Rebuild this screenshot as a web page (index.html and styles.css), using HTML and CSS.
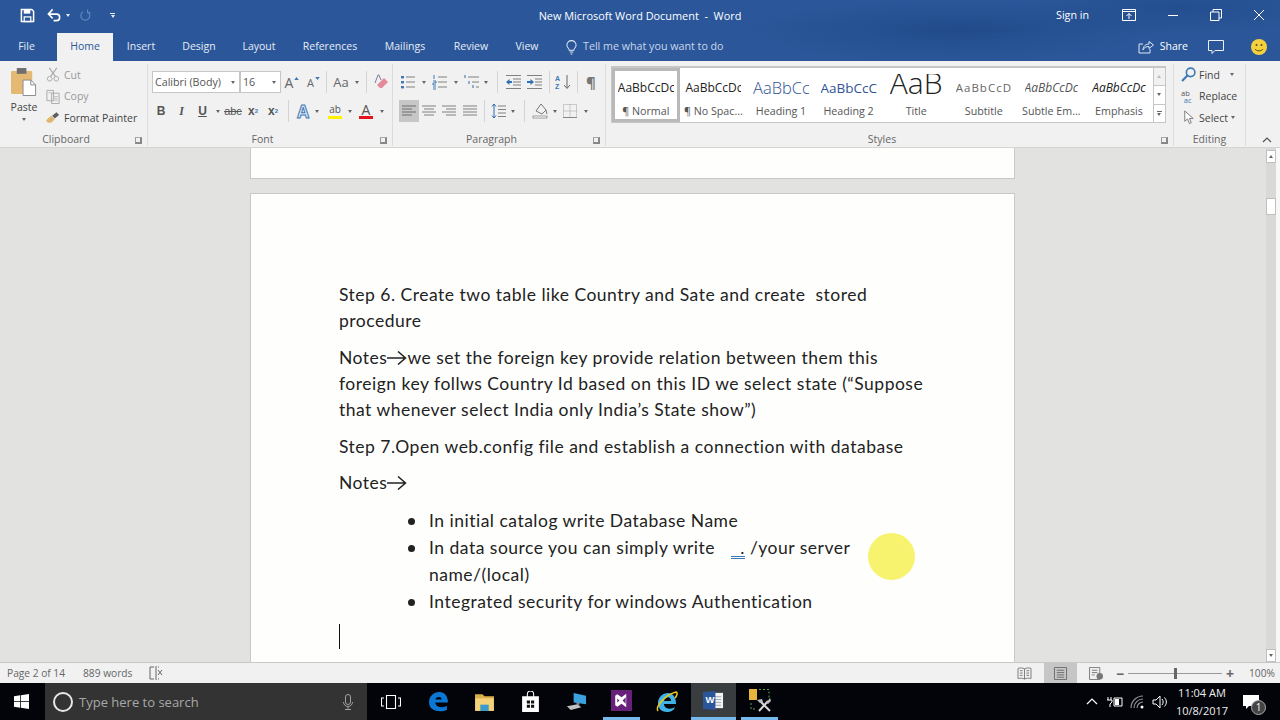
FILE: index.html
```html
<!DOCTYPE html>
<html lang="en">
<head>
    <meta charset="UTF-8">
    <title>New Microsoft Word Document - Word</title>
    <link rel="stylesheet" href="styles.css">
</head>
<body>

    <svg class="defs" aria-hidden="true">
        <symbol id="ic-list" viewBox="0 0 16 16"><g fill="#3f78b5"><rect x="1" y="2" width="3" height="2.4"/><rect x="1" y="7" width="3" height="2.4"/><rect x="1" y="12" width="3" height="2.4"/></g><path d="M6 3h9M6 8h9M6 13h9" stroke="#808080" stroke-width="1.2"/></symbol>
        <symbol id="ic-num" viewBox="0 0 16 16"><path d="M2 1v4M1 7h3v2H1v2h3M1 13h3M1 15h3" stroke="#3f78b5" stroke-width="1" fill="none"/><path d="M6 3h9M6 8h9M6 13h9" stroke="#808080" stroke-width="1.2"/></symbol>
        <symbol id="ic-multi" viewBox="0 0 16 16"><path d="M1 1v3M5 7v3M9 11v3" stroke="#3f78b5" stroke-width="1.1"/><path d="M4 3h11M8 8h7M12 13h3" stroke="#808080" stroke-width="1.2"/></symbol>
        <symbol id="ic-outdent" viewBox="0 0 16 16"><path d="M1 1.500h15M8 5h8M8 8h8M8 11h8M1 14.500h15" stroke="#808080" stroke-width="1.1"/><path d="M1 8l3.500-3v2H7v2H4.500v2z" fill="#2f6fb3"/></symbol>
        <symbol id="ic-indent" viewBox="0 0 16 16"><path d="M1 1.500h15M9 5h7M9 8h7M9 11h7M1 14.500h15" stroke="#808080" stroke-width="1.1"/><path d="M8 8L4.500 5v2H1v2h3.500v2z" fill="#2f6fb3"/></symbol>
        <symbol id="ic-left" viewBox="0 0 16 16"><path d="M1 3h14M1 6h10M1 9h14M1 12h10" stroke="#6d6d6d" stroke-width="1.1"/></symbol>
        <symbol id="ic-center" viewBox="0 0 16 16"><path d="M1 3h14M3 6h10M1 9h14M3 12h10" stroke="#808080" stroke-width="1.1"/></symbol>
        <symbol id="ic-right" viewBox="0 0 16 16"><path d="M1 3h14M5 6h10M1 9h14M5 12h10" stroke="#808080" stroke-width="1.1"/></symbol>
        <symbol id="ic-justify" viewBox="0 0 16 16"><path d="M1 3h14M1 6h14M1 9h14M1 12h14" stroke="#808080" stroke-width="1.1"/></symbol>
    </svg>

    <header class="titlebar">
        <div class="qat">
            <svg class="qat-save" viewBox="0 0 16 16"><path d="M1.500 1.500h11l2 2v11h-13z" fill="none" stroke="#fff" stroke-width="1.600"/><rect x="4" y="2" width="7" height="4" fill="#fff"/><rect x="4.500" y="9.500" width="7" height="5" fill="none" stroke="#fff" stroke-width="1.300"/></svg>
            <svg class="qat-undo" viewBox="0 0 16 16"><path d="M2 6.500h8a3.500 3.500 0 0 1 0 7H7" fill="none" stroke="#fff" stroke-width="1.700"/><path d="M6 1.500L1.500 6.500 6 11" fill="none" stroke="#fff" stroke-width="1.700"/></svg>
            <span class="caret caret-light qat-caret"></span>
            <svg class="qat-redo" viewBox="0 0 16 16"><path d="M10.500 3.500a5.500 5.500 0 1 1-5.500 0M10.500 0.500v4h3.500" fill="none" stroke="#5f86bd" stroke-width="1.400"/></svg>
            <span class="qat-more"><i></i><span class="caret caret-light"></span></span>
        </div>
        <div class="doc-title">New Microsoft Word Document &nbsp;-&nbsp; Word</div>
        <div class="window-btns">
            <span class="sign-in">Sign in</span>
            <svg class="win-btn win-display" viewBox="0 0 14 12"><path d="M.5.500h13v11H.5zM.5 2.500h13" fill="none" stroke="#fff"/><path d="M7 10V4.500M4.500 7L7 4.500 9.500 7" fill="none" stroke="#fff"/></svg>
            <svg class="win-btn win-min" viewBox="0 0 12 12"><path d="M1 6.500h10" stroke="#fff"/></svg>
            <svg class="win-btn win-restore" viewBox="0 0 12 12"><path d="M.5 3h8.500v8.500H.5zM3 3V.500h8.500V9H9" fill="none" stroke="#fff"/></svg>
            <svg class="win-btn win-close" viewBox="0 0 12 12"><path d="M1 1l10 10M11 1L1 11" stroke="#fff"/></svg>
        </div>
    </header>

    <nav class="tabs">
        <span class="tab tab-file">File</span>
        <span class="tab tab-home">Home</span>
        <span class="tab tab-insert">Insert</span>
        <span class="tab tab-design">Design</span>
        <span class="tab tab-layout">Layout</span>
        <span class="tab tab-refs">References</span>
        <span class="tab tab-mail">Mailings</span>
        <span class="tab tab-review">Review</span>
        <span class="tab tab-view">View</span>
        <svg class="bulb" viewBox="0 0 12 16"><path d="M3.500 11c0-2-2.500-3-2.500-5.500a5 5 0 0 1 10 0c0 2.500-2.500 3.500-2.500 5.500zM4 13h4M5 15h2" fill="none" stroke="#dfe7f3" stroke-width="1.100"/></svg>
        <span class="tell">Tell me what you want to do</span>
        <span class="tabs-right">
            <svg class="share-ic" viewBox="0 0 16 14"><path d="M5 4H1v9h11V9" fill="none" stroke="#dfe7f3"/><path d="M5 10c0-4 3-6 6-6V1.500L15.500 5 11 8.500V6.500c-3 0-5 1-6 3.500z" fill="none" stroke="#dfe7f3"/></svg>
            <span class="share">Share</span>
            <svg class="comment-ic" viewBox="0 0 16 14"><path d="M.5.500h15v10H7l-3 3v-3H.5z" fill="none" stroke="#eef2f8"/></svg>
            <svg class="smiley" viewBox="0 0 16 16"><circle cx="8" cy="8" r="8" fill="#f3d23d"/><circle cx="5.500" cy="6" r="1" fill="#5c4a10"/><circle cx="10.500" cy="6" r="1" fill="#5c4a10"/><path d="M4 10c1.500 2.500 6.500 2.500 8 0" fill="none" stroke="#5c4a10"/></svg>
        </span>
    </nav>

    <section class="ribbon">
        <div class="group group-clip">
            <div class="group-body clip-body">
                <div class="paste">
                    <svg class="paste-ic" viewBox="0 0 28 30"><rect x="0" y="3" width="22" height="24" rx="1" fill="#e3b974"/><rect x="6" y="0" width="10" height="6" fill="#6f6f6f"/><path d="M12.500 12.500h8l5 5v11h-13z" fill="#fff" stroke="#8a8a8a"/><path d="M20.500 12.500v5h5" fill="none" stroke="#8a8a8a"/></svg>
                    <span class="paste-label">Paste</span>
                    <span class="caret"></span>
                </div>
                <div class="clip-list">
                    <div class="clip-row muted"><svg viewBox="0 0 14 16"><path d="M3 1l6.500 9M11 1L4.500 10" stroke="#a9a9a9" stroke-width="1.200"/><circle cx="3.500" cy="12.500" r="2.500" fill="none" stroke="#a9a9a9"/><circle cx="10.500" cy="12.500" r="2.500" fill="none" stroke="#a9a9a9"/></svg>Cut</div>
                    <div class="clip-row muted"><svg viewBox="0 0 14 16"><path d="M.5 1.500h7v11h-7zM5.500 4.500h8v11h-8z" fill="#f1f1f1" stroke="#a9a9a9"/><path d="M7 8h5M7 10h5M7 12h5M2 4h4" stroke="#bdbdbd"/></svg>Copy</div>
                    <div class="clip-row"><svg viewBox="0 0 16 14"><path d="M0 10l6-5 4 4-4 4H2z" fill="#e2b56e"/><path d="M7 5l5-4 3 3-5 4z" fill="#5f5f5f"/></svg>Format Painter</div>
                </div>
            </div>
            <div class="group-label">Clipboard<span class="launcher"></span></div>
        </div>

        <div class="group group-font">
            <div class="group-body">
                <div class="tool-row row-font1">
                    <span class="combo combo-name">Calibri (Body)<span class="caret"></span></span>
                    <span class="combo combo-size">16<span class="caret"></span></span>
                    <span class="tool t-22 glyph glyph-grow">A<svg viewBox="0 0 6 4"><path d="M3 0l3 4H0z" fill="#3f78b5"/></svg></span>
                    <span class="tool t-21 glyph glyph-shrink">A<svg viewBox="0 0 6 4"><path d="M3 4L0 0h6z" fill="#3f78b5"/></svg></span>
                    <span class="sep s-a"></span>
                    <span class="tool t-24 glyph glyph-case">Aa</span>
                    <span class="caret tool-caret t-8"></span>
                    <span class="sep s-b"></span>
                    <span class="tool t-20"><svg class="ic" viewBox="0 0 16 16"><path d="M7 14l-3-3 7-7 4 4-6 6z" fill="#e58a9b"/><path d="M2 9L5 1h1l2 5" fill="none" stroke="#7c7c9c"/></svg></span>
                </div>
                <div class="tool-row row-font2">
                    <span class="tool t-20 fmt fmt-b">B</span>
                    <span class="tool t-21 fmt fmt-i">I</span>
                    <span class="tool t-21 fmt fmt-u">U</span>
                    <span class="caret tool-caret t-10"></span>
                    <span class="tool t-20 fmt fmt-s">abc</span>
                    <span class="tool t-20 fmt">x<sub>2</sub></span>
                    <span class="tool t-20 fmt">x<sup>2</sup></span>
                    <span class="sep s-c"></span>
                    <span class="tool t-18 glyph glyph-effect">A</span>
                    <span class="caret tool-caret t-10"></span>
                    <span class="tool t-20 hl-tool ml-3">ab<i class="bar bar-yellow"></i></span>
                    <span class="caret tool-caret t-10"></span>
                    <span class="tool t-20 hl-tool hl-a ml-1">A<i class="bar bar-red"></i></span>
                    <span class="caret tool-caret t-10 ml-1"></span>
                </div>
            </div>
            <div class="group-label">Font<span class="launcher"></span></div>
        </div>

        <div class="group group-para">
            <div class="group-body">
                <div class="tool-row row-para1">
                    <span class="tool t-20"><svg class="ic"><use href="#ic-list"/></svg></span>
                    <span class="caret tool-caret t-12"></span>
                    <span class="tool t-20"><svg class="ic"><use href="#ic-num"/></svg></span>
                    <span class="caret tool-caret t-12"></span>
                    <span class="tool t-19"><svg class="ic"><use href="#ic-multi"/></svg></span>
                    <span class="caret tool-caret t-10"></span>
                    <span class="sep s-d"></span>
                    <span class="tool t-20"><svg class="ic"><use href="#ic-outdent"/></svg></span>
                    <span class="tool t-21"><svg class="ic"><use href="#ic-indent"/></svg></span>
                    <span class="sep s-e"></span>
                    <span class="tool t-20"><svg class="ic" viewBox="0 0 16 16"><text x="0" y="7" class="sort-a">A</text><text x="0" y="15" class="sort-z">Z</text><path d="M12 1v13M9 11l3 3.500 3-3.500" fill="none" stroke="#666"/></svg></span>
                    <span class="sep s-f"></span>
                    <span class="tool t-20 pilcrow">¶</span>
                </div>
                <div class="tool-row row-para2">
                    <span class="tool t-20 active"><svg class="ic"><use href="#ic-left"/></svg></span>
                    <span class="tool t-20"><svg class="ic"><use href="#ic-center"/></svg></span>
                    <span class="tool t-20"><svg class="ic"><use href="#ic-right"/></svg></span>
                    <span class="tool t-21"><svg class="ic"><use href="#ic-justify"/></svg></span>
                    <span class="sep s-g"></span>
                    <span class="tool t-18"><svg class="ic" viewBox="0 0 16 16"><path d="M3 1v14M1 3.500L3 1l2 2.500M1 12.500L3 15l2-2.500" fill="none" stroke="#2f6fb3"/><path d="M7 3h8M7 6.500h8M7 10h8M7 13.500h8" stroke="#808080"/></svg></span>
                    <span class="caret tool-caret t-10"></span>
                    <span class="sep s-h"></span>
                    <span class="tool t-20"><svg class="ic" viewBox="0 0 16 16"><path d="M4 8l5-7 5 6-4 4z" fill="#f1f1f1" stroke="#777"/><path d="M14 7l1 4" stroke="#777"/><rect x="1" y="13" width="14" height="2" fill="#fff" stroke="#777" stroke-width=".7"/></svg></span>
                    <span class="caret tool-caret t-10"></span>
                    <span class="tool t-20"><svg class="ic" viewBox="0 0 16 16"><path d="M1.500 1.500h13v13h-13zM8 1.500v13M1.500 8h13" fill="none" stroke="#a2a2a2" stroke-dasharray="1 1"/><path d="M1 14.500h14" stroke="#888"/></svg></span>
                    <span class="caret tool-caret t-10 ml-1"></span>
                </div>
            </div>
            <div class="group-label">Paragraph<span class="launcher"></span></div>
        </div>

        <div class="group group-styles">
            <div class="group-body">
                <div class="gallery">
                    <div class="style-item selected"><span class="pv pv-normal">AaBbCcDc</span><span class="nm">¶ Normal</span></div>
                    <div class="style-item"><span class="pv pv-normal">AaBbCcDc</span><span class="nm">¶ No Spac...</span></div>
                    <div class="style-item"><span class="pv pv-h1">AaBbCc</span><span class="nm">Heading 1</span></div>
                    <div class="style-item"><span class="pv pv-h2">AaBbCcC</span><span class="nm">Heading 2</span></div>
                    <div class="style-item"><span class="pv pv-title">AaB</span><span class="nm">Title</span></div>
                    <div class="style-item"><span class="pv pv-sub">AaBbCcD</span><span class="nm">Subtitle</span></div>
                    <div class="style-item"><span class="pv pv-em pv-gray">AaBbCcDc</span><span class="nm">Subtle Em...</span></div>
                    <div class="style-item"><span class="pv pv-em">AaBbCcDc</span><span class="nm">Emphasis</span></div>
                    <div class="gallery-btns">
                        <span class="g-btn g-off"><span class="caret caret-up"></span></span>
                        <span class="g-btn"><span class="caret"></span></span>
                        <span class="g-btn g-more"><i></i><span class="caret"></span></span>
                    </div>
                </div>
            </div>
            <div class="group-label">Styles<span class="launcher"></span></div>
        </div>

        <div class="group group-edit">
            <div class="group-body edit-list">
                <div class="edit-row"><svg viewBox="0 0 14 14"><circle cx="9" cy="5" r="4" fill="none" stroke="#3f78b5" stroke-width="1.500"/><path d="M6 8l-5 5" stroke="#3f78b5" stroke-width="2"/></svg>Find<span class="caret ml-6"></span></div>
                <div class="edit-row"><svg viewBox="0 0 16 16"><text x="0" y="7" class="rep-a">ab</text><text x="3" y="15" class="rep-b">ac</text></svg>Replace</div>
                <div class="edit-row"><svg viewBox="0 0 14 16"><path d="M3 1v11l3-2.500 2 5 2-1-2-4.500h4z" fill="#fff" stroke="#777"/></svg>Select<span class="caret"></span></div>
            </div>
            <div class="group-label">Editing</div>
        </div>

        <div class="ribbon-end"><svg class="collapse" viewBox="0 0 10 6"><path d="M1 5l4-4 4 4" fill="none" stroke="#555" stroke-width="1.200"/></svg></div>
    </section>

    <main class="doc-area">
        <div class="doc-scroll">
            <div class="page page-prev"></div>
            <article class="page page-cur">
                <p>Step 6. Create two table like Country and Sate and create&nbsp; stored procedure</p>
                <p>Notes<svg class="arrow" viewBox="0 0 20 14"><path d="M0 7h18M11 .5L18.500 7 11 13.500" fill="none" stroke="#222" stroke-width="1.500"/></svg>we set the foreign key provide relation between them this foreign key follws Country Id based on this ID we select state (“Suppose that whenever select India only India’s State show”)</p>
                <p>Step 7.Open web.config file and establish a connection with database</p>
                <p>Notes<svg class="arrow" viewBox="0 0 20 14"><path d="M0 7h18M11 .5L18.500 7 11 13.500" fill="none" stroke="#222" stroke-width="1.500"/></svg></p>
                <ul>
                    <li>In initial catalog write Database Name</li>
                    <li>In data source you can simply write <span class="autocorrect">.</span> /your server name/(local)</li>
                    <li>Integrated security for windows Authentication</li>
                </ul>
                <div class="text-caret"></div>
            </article>
        </div>
        <div class="scrollbar">
            <span class="sb-btn"><span class="caret caret-up"></span></span>
            <span class="sb-thumb"></span>
            <span class="sb-btn sb-down"><span class="caret"></span></span>
        </div>
        <div class="doc-edge"></div>
        <div class="mouse-spot"></div>
    </main>

    <footer class="statusbar">
        <span class="st-page">Page 2 of 14</span>
        <span class="st-words">889 words</span>
        <svg class="st-proof" viewBox="0 0 14 14"><path d="M5 1H1v12h4M9 1h1M9 13h1" fill="none" stroke="#666"/><path d="M7 0v14M9 4l4 5M13 4l-4 5" stroke="#666"/></svg>
        <span class="st-right">
            <span class="view-btn view-read"><svg viewBox="0 0 16 14"><path d="M8 2C6 .8 3 .8 1 1.500v11c2-.7 5-.7 7 .5 2-1.200 5-1.200 7-.5v-11C13 .8 10 .8 8 2zM8 2v11M3 4h3M3 6.500h3M3 9h3M10 4h3M10 6.500h3M10 9h3" fill="none" stroke="#777"/></svg></span>
            <span class="view-btn view-on"><svg viewBox="0 0 14 14"><path d="M.5.500h13v13H.5zM3 3.500h8M3 6h8M3 8.500h8M3 11h8" fill="none" stroke="#6a6a6a"/></svg></span>
            <span class="view-btn view-web"><svg viewBox="0 0 16 14"><path d="M.5.500h11v13H.5zM3 3.500h6M3 6h6M3 8.500h3" fill="none" stroke="#777"/><circle cx="11.500" cy="10" r="3.500" fill="#777"/></svg></span>
            <span class="zoom-minus">−</span>
            <span class="zoom-track"><i></i></span>
            <span class="zoom-plus">+</span>
            <span class="zoom-pct">100%</span>
        </span>
    </footer>

    <div class="taskbar">
        <div class="start"><svg viewBox="0 0 16 16"><path d="M0 2.300l6.500-.9v6.200H0zM7.300 1.300L16 0v7.600H7.300zM0 8.400h6.500v6.200L0 13.700zM7.300 8.400H16V16l-8.700-1.300z" fill="#fff"/></svg></div>
        <div class="search">
            <span class="cortana"></span>
            <span class="search-text">Type here to search</span>
            <svg class="mic" viewBox="0 0 10 16"><rect x="2.500" y=".5" width="5" height="10" rx="2.500" fill="none" stroke="#a0a0a0"/><path d="M.5 8a4.500 4.500 0 0 0 9 0M5 12.500V15M2 15.500h6" fill="none" stroke="#a0a0a0"/></svg>
        </div>
        <div class="task-icons">
            <span class="task t-view"><svg viewBox="0 0 20 16"><path d="M5.500 1.500h9v13h-9zM3 4H.5v8H3M17 4h2.500v8H17" fill="none" stroke="#fff" stroke-width="1.100"/></svg></span>
            <span class="task t-edge"><svg viewBox="0 0 20 20"><path d="M1 11C1 5 5 1 11 1c5 0 8 4 8 10H7c0 4 6 6 11 3v4c-7 3-17 1-17-7zM7 8h6c0-3-5-3-6 0z" fill="#0c78d6"/></svg></span>
            <span class="task t-files"><svg viewBox="0 0 20 18"><path d="M1 2h7l2 2h9v3H1z" fill="#d9b04a"/><path d="M1 6h18v12H1z" fill="#f4d27a"/><path d="M6 18v-6h8v6z" fill="#3a9ac9"/></svg></span>
            <span class="task t-store"><svg viewBox="0 0 18 20"><path d="M6 6V3a3 3 0 0 1 6 0v3" fill="none" stroke="#fff"/><path d="M1 5h16v15H1z" fill="#fff"/><path d="M5.500 9h3v3h-3zM9.500 9h3v3h-3zM5.500 13h3v3h-3zM9.500 13h3v3h-3z" fill="#111"/></svg></span>
            <span class="task t-remote"><svg viewBox="0 0 22 20"><path d="M8 1l13 3v9L8 11z" fill="#3aa3df"/><path d="M1 15l11-2 4 3-11 3z" fill="#c2c2c2"/><path d="M11 11l3 .5v2l-3 .5z" fill="#8a8a8a"/></svg></span>
            <span class="task t-vs"><svg viewBox="0 0 20 20"><rect width="20" height="20" fill="#68217a"/><path d="M14.500 3.500v13L10 13l-4 3-2-1.500V5.500L6 4l4 3zM6 8v4l2-2zM14 7l-3 3 3 3z" fill="#fff"/></svg></span>
            <span class="task t-ie"><svg viewBox="0 0 24 24"><path d="M21 14H9c0 5 7 6 11 3-1 4-5 5-8 5-6 0-9-4-9-9 0-6 5-10 10-10s8 4 8 11zM9 11h7c0-5-6-5-7 0z" fill="#3fb3e8"/><path d="M3 21C0 17 10 5 21 2c2 0 1 4-1 6" fill="none" stroke="#f0c419" stroke-width="1.500"/></svg></span>
            <span class="task t-word"><svg viewBox="0 0 22 22"><path d="M8 3h13v16H8z" fill="#f2f2f2"/><path d="M12 7h7M12 10h7M12 13h7M12 16h7" stroke="#9aa7ba"/><path d="M0 2l13-1v20L0 20z" fill="#2b579a"/><text x="2.500" y="14" class="word-w">W</text></svg></span>
            <span class="task t-tools"><svg viewBox="0 0 24 24"><rect x="1" y="1" width="8" height="11" fill="#e8b43c"/><path d="M11 1.500h10v9M3 15v6h6" fill="none" stroke="#59a14f" stroke-dasharray="2 2"/><path d="M11 23l9-10M12 13l10 10" stroke="#d8d8d8" stroke-width="2"/><path d="M9 12l5-1 1 3-3 1zM18 15l4-5 1 3-3 3z" fill="#bdbdbd"/></svg></span>
        </div>
        <div class="tray">
            <svg class="tray-up" viewBox="0 0 12 7"><path d="M1 6l5-5 5 5" fill="none" stroke="#fff" stroke-width="1.200"/></svg>
            <svg class="tray-power" viewBox="0 0 16 12"><path d="M7 2h8v8H7z" fill="none" stroke="#fff"/><path d="M8 3h4v6H8z" fill="#fff"/><path d="M1 1v3M4 1v3M0 4h5v2l-2 2v3" fill="none" stroke="#fff"/></svg>
            <svg class="tray-wifi" viewBox="0 0 16 14"><path d="M1 13A12 12 0 0 1 13 1M4 13A9 9 0 0 1 13 4M7 13a6 6 0 0 1 6-6" fill="none" stroke="#8f8f8f" stroke-width="1.200"/><circle cx="12" cy="12" r="1.500" fill="#fff"/></svg>
            <svg class="tray-sound" viewBox="0 0 16 14"><path d="M1 5h3l4-4v12L4 9H1zM10 4c1.500 2 1.500 4 0 6M12.500 2.500c2.500 3 2.500 6 0 9" fill="none" stroke="#fff"/></svg>
            <div class="clock"><span>11:04 AM</span><span>10/8/2017</span></div>
            <span class="notify">
                <svg viewBox="0 0 16 14"><path d="M0 0h16v11H6l-3 3v-3H0z" fill="#fff"/></svg>
                <span class="notify-count">1</span>
            </span>
        </div>
    </div>

</body>
</html>
```

FILE: styles.css
```css
* { box-sizing: border-box; }
html, body {
    margin: 0;
    width: 1280px;
    height: 720px;
    overflow: hidden;
}
body {
    font-family: "Open Sans", sans-serif;
    font-size: 10.5px;
    color: #444;
    display: flex;
    flex-direction: column;
    background: #f1f1f1;
}
.defs { display: none; }
svg { display: block; flex: none; }

/* shared bits */
.caret {
    display: inline-block;
    width: 0;
    height: 0;
    border-left: 2.5px solid transparent;
    border-right: 2.5px solid transparent;
    border-top: 3px solid #666;
}
.caret-light { border-top-color: #e8eef7; }
.caret-up { border-top: 0; border-bottom: 3px solid #666; }
.ml-1 { margin-left: 1px; }
.ml-3 { margin-left: 3px; }
.ml-6 { margin-left: 7px; }

/* title bar */
.titlebar {
    height: 33px;
    display: grid;
    grid-template-columns: 1fr auto 1fr;
    align-items: center;
    padding-bottom: 3px;
    color: #fff;
    background:
        radial-gradient(ellipse 220px 30px at 960px 30px, rgba(20, 60, 120, .45), transparent),
        radial-gradient(ellipse 160px 26px at 1180px 8px, rgba(20, 60, 120, .35), transparent),
        #2b579a;
}
.qat { display: flex; align-items: center; padding-left: 20px; }
.qat-save { width: 15px; height: 15px; }
.qat-undo { width: 15px; height: 15px; margin-left: 12px; }
.qat-caret { margin-left: 4px; }
.qat-redo { width: 13px; height: 13px; margin-left: 9px; }
.qat-more { display: flex; flex-direction: column; align-items: center; gap: 1px; margin-left: 18px; }
.qat-more i { width: 5px; height: 1px; background: #e8eef7; }
.doc-title { font-size: 10.9px; }
.window-btns { display: flex; align-items: center; justify-content: flex-end; padding-right: 15px; }
.sign-in { font-size: 10.7px; margin-right: 33px; }
.win-btn { width: 12px; height: 12px; }
.win-display { width: 14px; height: 12px; }
.win-min { margin-left: 31px; }
.win-restore { margin-left: 31px; }
.win-close { margin-left: 31px; }

/* tabs */
.tabs {
    height: 28px;
    display: flex;
    align-items: center;
    color: #e6ecf5;
    background:
        radial-gradient(ellipse 200px 30px at 950px 0, rgba(20, 60, 120, .4), transparent),
        #2b579a;
    font-size: 10.5px;
}
.tab { height: 100%; display: flex; align-items: center; justify-content: center; padding-bottom: 2px; }
.tab-file { width: 57px; padding-right: 4px; }
.tab-home { width: 56px; background: #f1f1f1; color: #2b579a; }
.tab-insert { width: 56px; }
.tab-design { width: 60px; }
.tab-layout { width: 60px; }
.tab-refs { width: 82px; }
.tab-mail { width: 68px; }
.tab-review { width: 64px; }
.tab-view { width: 48px; }
.bulb { width: 11px; height: 15px; margin-left: 15px; }
.tell { margin-left: 6px; color: #c9d6e9; padding-bottom: 2px; font-size: 10.7px; }
.tabs-right { margin-left: auto; display: flex; align-items: center; padding-right: 13px; }
.share-ic { width: 16px; height: 14px; }
.share { margin-left: 6px; color: #fff; padding-bottom: 2px; }
.comment-ic { width: 16px; height: 14px; margin-left: 20px; }
.smiley { width: 16px; height: 16px; margin-left: 27px; }

/* ribbon */
.ribbon {
    height: 87px;
    display: flex;
    background: #f1f1f1;
    border-bottom: 1px solid #d4d4d4;
}
.group {
    display: flex;
    flex-direction: column;
    border-right: 1px solid #dcdcdc;
    margin: 3px 0 1px;
}
.group-body { height: 71px; padding-top: 7px; }
.group-label {
    position: relative;
    flex: 1;
    text-align: center;
    padding-right: 15px;
    font-size: 10.5px;
    color: #666;
    line-height: 13px;
}
.group-edit .group-label { padding-right: 0; }
.launcher {
    position: absolute;
    right: 5px;
    bottom: 2px;
    width: 7px;
    height: 7px;
    border-left: 1px solid #999;
    border-top: 1px solid #999;
    border-right: 2px solid #888;
    border-bottom: 2px solid #888;
    border-top-color: #aaa;
}
.group-clip { width: 148px; }
.group-font { width: 245px; }
.group-para { width: 213px; }
.group-styles { width: 568px; }
.group-edit { width: 72px; }
.ribbon-end { flex: 1; display: flex; align-items: flex-end; justify-content: flex-end; padding: 0 8px 4px 0; }
.collapse { width: 10px; height: 6px; }

.clip-body { display: flex; padding-top: 0; }
.paste { width: 46px; display: flex; flex-direction: column; align-items: center; padding-left: 2px; }
.paste-ic { width: 27px; height: 29px; margin-top: 4px; }
.paste-label { margin-top: 2px; line-height: 16px; }
.paste .caret { margin-top: 3px; }
.clip-list { display: flex; flex-direction: column; }
.clip-row { height: 21.5px; display: flex; align-items: center; gap: 4px; white-space: nowrap; }
.clip-row svg { width: 14px; height: 15px; }
.muted { color: #9a9a9a; }

.tool-row { display: flex; align-items: center; height: 22px; }
.row-font1 { padding-left: 4px; margin-bottom: 7px; }
.row-font2 { padding-left: 3px; }
.row-para1 { padding-left: 5px; margin-bottom: 7px; }
.row-para2 { padding-left: 6px; }
.tool { height: 22px; display: flex; align-items: center; justify-content: center; flex: none; }
.t-8, .t-10, .t-12 { border: 0; height: auto; background: none; display: flex; justify-content: center; flex: none; }
.t-8 { width: 8px; }
.t-10 { width: 10px; }
.t-12 { width: 12px; }
.t-8::after, .t-10::after, .t-12::after {
    content: "";
    border-left: 2.5px solid transparent;
    border-right: 2.5px solid transparent;
    border-top: 3px solid #666;
}
.t-18 { width: 18px; }
.t-19 { width: 19px; }
.t-20 { width: 20px; }
.t-21 { width: 21px; }
.t-22 { width: 22px; }
.t-24 { width: 24px; }
.ic { width: 16px; height: 16px; }
.sep { width: 1px; height: 22px; background: #d4d4d4; flex: none; }
.s-a { margin: 0 2px; }
.s-b { margin: 0 4px 0 5px; }
.s-c { margin: 0 5px; }
.s-d { margin: 0 5px 0 6px; }
.s-e { margin: 0 3px 0 5px; }
.s-f { margin: 0 3px 0 4px; }
.s-g { margin: 0 5px 0 4px; }
.s-h { margin: 0 5px 0 6px; }
.active { background: #c6c6c6; }

.combo {
    height: 22px;
    background: #fff;
    border: 1px solid #c6c6c6;
    display: flex;
    align-items: center;
    justify-content: space-between;
    padding: 0 4px 0 2px;
    font-size: 10.7px;
    color: #555;
}
.combo-name { width: 88px; }
.combo-size { width: 41px; }
.glyph { color: #666; font-size: 13px; align-items: center; }
.glyph svg { width: 5px; height: 3px; margin: -8px 0 0 1px; }
.glyph-grow { font-size: 14px; }
.glyph-shrink { font-size: 11px; }
.glyph-case { font-size: 13px; }
.glyph-effect { font-size: 17px; color: #dce8f6; font-weight: 700; -webkit-text-stroke: 1px #3f78b5; }
.fmt { font-size: 12px; color: #555; font-weight: 700; font-family: "Liberation Sans", sans-serif; }
.fmt sub, .fmt sup { font-size: 6px; color: #3f78b5; line-height: 0; }
.fmt-i { font-style: italic; font-family: "Liberation Serif", serif; }
.fmt-u { text-decoration: underline; }
.fmt-s { font-weight: 400; font-size: 11px; text-decoration: line-through; }
.hl-tool { position: relative; font-size: 10px; color: #555; padding-bottom: 5px; }
.hl-a { font-size: 14px; padding-bottom: 3px; }
.bar { position: absolute; left: 3px; right: 3px; bottom: 3px; height: 3px; }
.bar-yellow { background: #fff200; }
.bar-red { background: #e5131a; }
.pilcrow { font-size: 15px; font-weight: 700; color: #777; }
.sort-a { font: 700 7px "Liberation Sans", sans-serif; fill: #3f78b5; }
.sort-z { font: 700 7px "Liberation Sans", sans-serif; fill: #3f78b5; }
.rep-a { font: 8px "Open Sans", sans-serif; fill: #555; }
.rep-b { font: 8px "Open Sans", sans-serif; fill: #3f78b5; }

/* style gallery */
.group-styles .group-body { padding: 2px 7px 0 5px; }
.gallery {
    height: 57px;
    display: flex;
    background: #fff;
    border: 1px solid #c6c6c6;
    border-top-width: 2px;
}
.style-item {
    width: 67.6px;
    flex: none;
    height: 100%;
    display: flex;
    flex-direction: column;
    align-items: center;
    overflow: hidden;
    border: 3px solid transparent;
    border-top-width: 0;
}
.selected { border: 3px solid #b9b9b9; }
.pv {
    height: 35px;
    max-width: 56px;
    overflow: hidden;
    white-space: nowrap;
    line-height: 40px;
    font-size: 12px;
    color: #222;
}
.selected .pv { height: 32px; line-height: 34px; }
.pv-h1 { color: #2f5496; font-size: 16.5px; font-weight: 300; }
.pv-h2 { color: #2f5496; font-size: 13.5px; }
.pv-title { margin-top: 6px; height: 29px; font-size: 30px; font-weight: 300; color: #222; line-height: 17px; }
.pv-sub { color: #666; letter-spacing: 1px; font-size: 11.5px; }
.pv-em { font-style: italic; }
.pv-gray { color: #555; }
.nm { font-size: 10.7px; color: #555; line-height: 16px; white-space: nowrap; }
.gallery-btns { width: 13px; display: flex; flex-direction: column; border-left: 1px solid #c6c6c6; }
.g-btn { flex: 1; display: flex; flex-direction: column; gap: 1px; align-items: center; justify-content: center; border-bottom: 1px solid #c6c6c6; }
.g-btn:last-child { border-bottom: 0; }
.g-off { background: #f1f1f1; }
.g-off .caret { border-bottom-color: #bbb; }
.g-more i { width: 5px; height: 1px; background: #666; }

.edit-list { padding: 0 0 0 7px; }
.edit-row { height: 21.5px; display: flex; align-items: center; gap: 3px; }
.edit-row svg { width: 15px; height: 15px; }

/* document */
.doc-area {
    position: relative;
    flex: 1;
    min-height: 0;
    display: flex;
    background: #e2e3e1;
}
.doc-scroll {
    width: 1266px;
    display: flex;
    flex-direction: column;
    gap: 14px;
    align-items: center;
    overflow: hidden;
}
.page {
    width: 765px;
    margin-left: -1px;
    background: #fefffd;
    border: 1px solid #c8c8c8;
    flex: none;
}
.page-prev { height: 31px; border-top: 0; }
.page-cur {
    flex: 1;
    border-bottom: 0;
    padding: 88px 89px 0 88px;
    font-family: Lato, sans-serif;
    font-size: 17.5px;
    line-height: 26.2px;
    color: #222;
    letter-spacing: .5px;
}
.page-cur p { margin: 0 0 10.4px; }
.page-cur ul { margin: 1px 0 0; padding: 0 0 0 90px; list-style: none; }
.page-cur li { line-height: 27px; }
.page-cur li::before {
    content: "";
    display: inline-block;
    width: 7px;
    height: 7px;
    border-radius: 50%;
    background: #222;
    margin: 0 14px 0 -21px;
    vertical-align: 2px;
}
.arrow { display: inline-block; width: 20px; height: 14px; vertical-align: -1px; }
.autocorrect {
    display: inline-block;
    width: 14px;
    margin-left: 11px;
    text-align: right;
    line-height: 17px;
    border-bottom: 3px double #3f78b5;
}
.text-caret { width: 1px; height: 25px; background: #111; margin-top: 9px; }
.scrollbar {
    width: 10px;
    background: #d9dad8;
    display: flex;
    flex-direction: column;
    padding-top: 2px;
}
.sb-btn { height: 13px; background: #fff; border: 1px solid #c0c0c0; display: flex; align-items: center; justify-content: center; flex: none; }
.sb-thumb { height: 17px; margin-top: 35px; background: #fff; border: 1px solid #c0c0c0; }
.sb-down { margin-top: auto; }
.doc-edge { flex: 1; background: #f8f9f7; }
.mouse-spot {
    position: absolute;
    left: 868px;
    top: 385px;
    width: 47px;
    height: 47px;
    border-radius: 50%;
    background: #f7f36e;
}

/* status bar */
.statusbar {
    height: 21px;
    display: flex;
    align-items: center;
    background: #f1f1f1;
    border-top: 1px solid #c8c8c8;
    font-size: 10.2px;
    color: #666;
    padding-left: 7px;
}
.st-words { margin-left: 18px; }
.st-proof { width: 14px; height: 14px; margin-left: 17px; }
.st-right { margin-left: auto; display: flex; align-items: center; height: 100%; }
.view-btn { width: 33px; height: 100%; display: flex; align-items: center; justify-content: center; }
.view-btn svg { width: 15px; height: 13px; }
.view-read { padding-right: 6px; }
.view-web { padding-left: 6px; }
.view-on { background: #c6c6c6; }
.zoom-minus, .zoom-plus { font-size: 14px; font-weight: 700; color: #666; }
.zoom-minus { margin-left: 6px; }
.zoom-track { position: relative; width: 94px; height: 1px; background: #999; margin: 0 4px; }
.zoom-track i { position: absolute; left: 46px; top: -5px; width: 3px; height: 11px; background: #666; }
.zoom-pct { width: 24px; margin: 0 7px 0 15px; }

/* taskbar */
.taskbar {
    height: 37px;
    display: flex;
    align-items: center;
    background: #02040a;
    color: #fff;
}
.start { width: 45px; padding-left: 14px; }
.start svg { width: 15px; height: 15px; }
.search {
    width: 322px;
    height: 100%;
    background: #333;
    display: flex;
    align-items: center;
    padding-left: 8px;
}
.cortana { width: 20px; height: 20px; border: 2.5px solid #e8e8e8; border-radius: 50%; }
.search-text { margin-left: 6px; font-size: 13px; color: #a8a8a8; }
.mic { width: 10px; height: 16px; margin-left: auto; margin-right: 14px; }
.task-icons { display: flex; height: 100%; }
.task { width: 46px; height: 100%; display: flex; align-items: center; justify-content: center; }
.task svg { width: 21px; height: 21px; }
.t-view { width: 23px; margin: 0 13px 0 12px; }
.t-view svg { width: 20px; height: 16px; }
.t-vs { width: 37px; margin: 0 5px 0 4px; border-bottom: 3px solid #76b9ed; }
.t-ie { width: 44px; }
.t-word { background: #3a3d40; width: 45px; margin-left: 2px; border-bottom: 3px solid #76b9ed; }
.t-tools { width: 37px; margin-left: 5px; border-bottom: 3px solid #76b9ed; }
.t-ie svg, .t-tools svg { width: 24px; height: 24px; }
.word-w { font: 700 10px "Liberation Sans", sans-serif; fill: #fff; }
.tray { margin-left: auto; display: flex; align-items: center; height: 100%; }
.tray-up { width: 12px; height: 7px; }
.tray-power { width: 16px; height: 12px; margin-left: 9px; }
.tray-wifi { width: 16px; height: 14px; margin-left: 7px; }
.tray-sound { width: 16px; height: 14px; margin-left: 6px; }
.clock {
    display: flex;
    flex-direction: column;
    align-items: center;
    width: 48px;
    margin-left: 10px;
    font-size: 11px;
    line-height: 18px;
    color: #eee;
    white-space: nowrap;
}
.notify { position: relative; width: 16px; margin: 0 21px 0 17px; }
.notify svg { width: 16px; height: 14px; }
.notify-count {
    position: absolute;
    right: -7px;
    top: 5px;
    width: 15px;
    height: 15px;
    border-radius: 50%;
    background: #444;
    border: 1px solid #aaa;
    font-size: 10px;
    line-height: 13px;
    text-align: center;
}
```
